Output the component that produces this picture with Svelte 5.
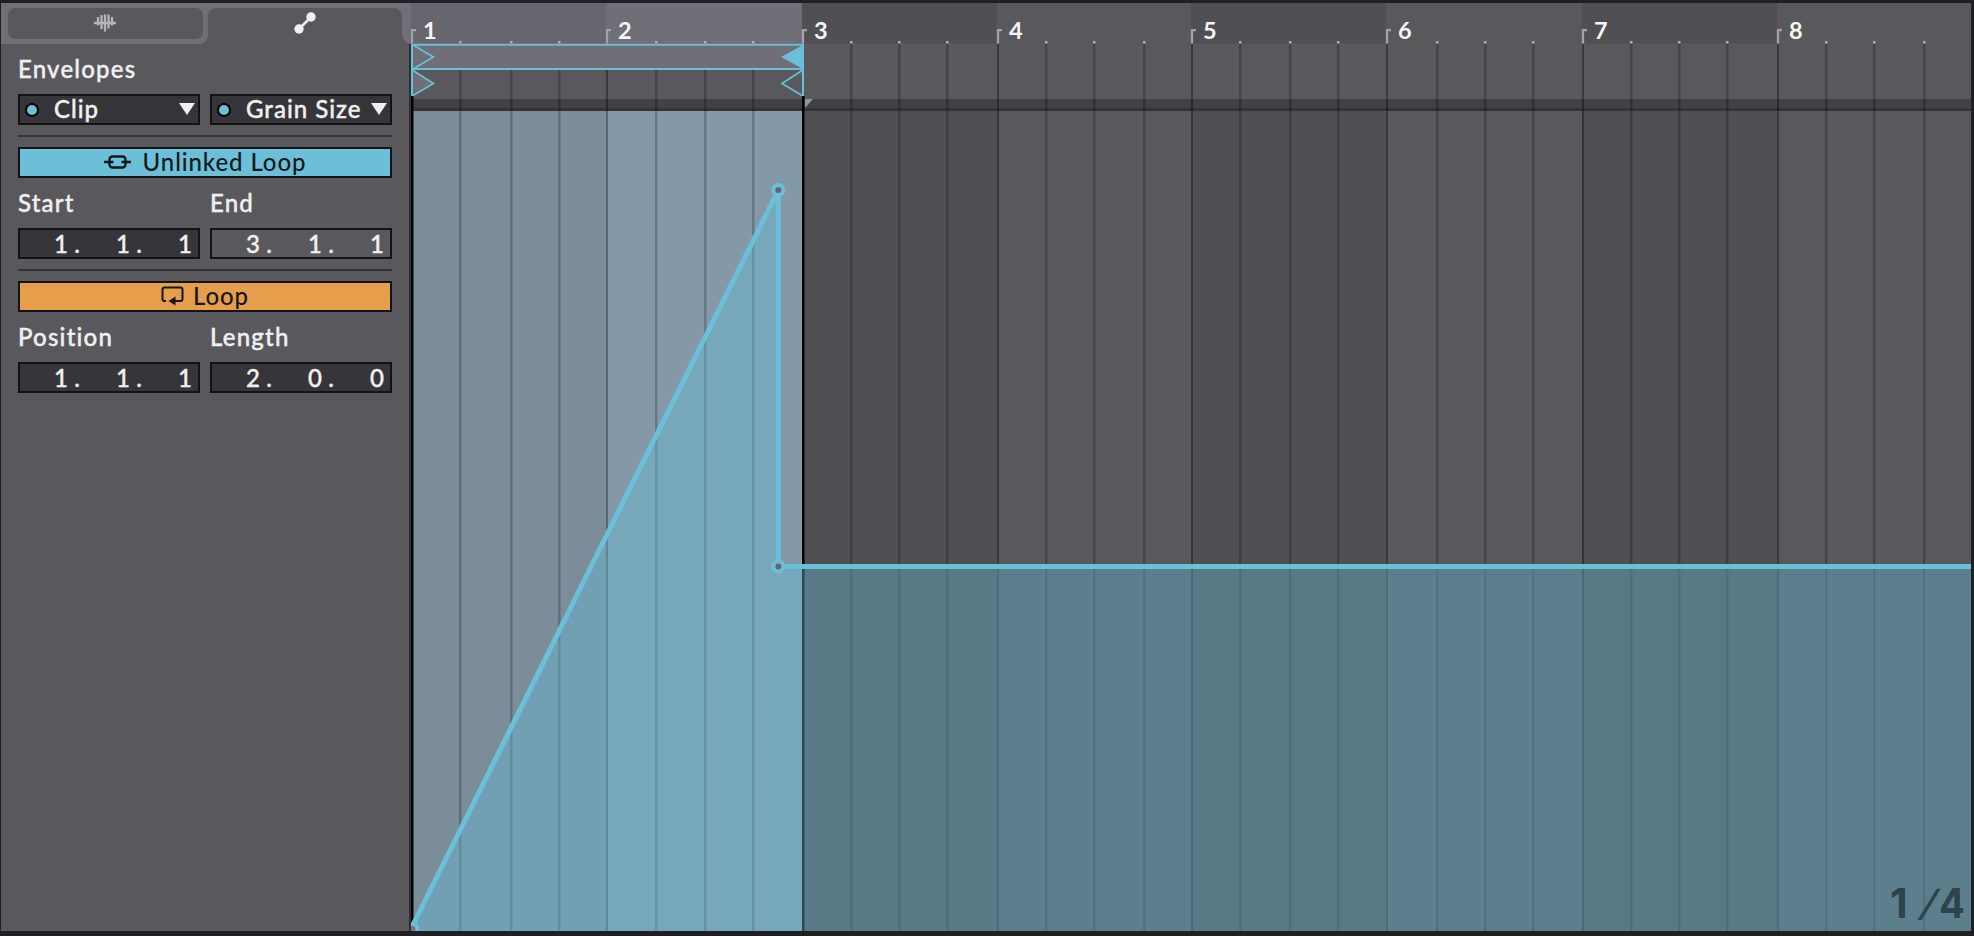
<script lang="ts">
  type Field = { label: string; parts: string[]; active?: boolean };

  const range: Field[] = [
    { label: 'Start', parts: ['1.', '1.', '1'] },
    { label: 'End', parts: ['3.', '1.', '1'], active: true }
  ];
  const loop: Field[] = [
    { label: 'Position', parts: ['1.', '1.', '1'] },
    { label: 'Length', parts: ['2.', '0.', '0'] }
  ];
  const choosers = ['Clip', 'Grain Size'];

  // left edge of every bar, followed by its three inner beats
  const bars = [
    { n: 1, x: 0, beats: [48, 99, 147] },
    { n: 2, x: 195, beats: [244, 293, 341] },
    { n: 3, x: 391, beats: [439, 487, 535] },
    { n: 4, x: 586, beats: [634, 682, 732] },
    { n: 5, x: 780, beats: [828, 878, 926] },
    { n: 6, x: 975, beats: [1025, 1073, 1121] },
    { n: 7, x: 1171, beats: [1219, 1267, 1315] },
    { n: 8, x: 1366, beats: [1414, 1462, 1512] }
  ];
  const width = 1560;
  const loopEnd = 391;

  const rulerFill = (n: number) =>
    n === 1 ? '#67656d' : n === 2 ? '#706e77' : n % 2 ? '#504f53' : '#59585d';
  const laneFill = (n: number) =>
    n === 1 ? '#7b8d9b' : n === 2 ? '#8499a8' : n % 2 ? '#504f53' : '#59585d';
  const barWidth = (i: number) => (bars[i + 1]?.x ?? width) - bars[i].x;
</script>

{#snippet fieldRow(fields: Field[])}
  <div class="row labels">
    {#each fields as f}
      <span class="label">{f.label}</span>
    {/each}
  </div>
  <div class="row">
    {#each fields as f}
      <div class="box position" class:active={f.active}>
        {#each f.parts as part}
          <span class="part"><b>{part[0]}</b><b>{part[1] ?? ''}</b></span>
        {/each}
      </div>
    {/each}
  </div>
{/snippet}

<div class="clip-view">
  <aside class="sidebar">
    <div class="tabs">
      <button class="tab" aria-label="Sample">
        <svg width="22" height="18" viewBox="0 0 22 18" fill="none" stroke="#b5b4b8" stroke-width="2.300">
          <path d="M0 9h22M4 3v8.500M7.500 1v14M11 0.500v17M14.500 0.500v14M18 3v8.500" />
        </svg>
      </button>
      <button class="tab selected" aria-label="Envelopes">
        <svg width="22" height="22" viewBox="0 0 22 22" fill="#f0f0f0">
          <path d="M5 17L17 5" stroke="#f0f0f0" stroke-width="2.500" />
          <circle cx="5" cy="17" r="4.700" />
          <circle cx="17" cy="5" r="4.700" />
        </svg>
      </button>
    </div>

    <div class="panel">
      <div class="row labels"><span class="label">Envelopes</span></div>
      <div class="row">
        {#each choosers as name}
          <button class="box chooser">
            <i class="dot"></i>
            <span class="name">{name}</span>
            <svg width="16" height="12" viewBox="0 0 16 12"><path d="M0 0h16l-8 12z" fill="#f0f0f0" /></svg>
          </button>
        {/each}
      </div>

      <hr />
      <button class="box toggle unlinked">
        <svg width="27" height="14" viewBox="0 0 27 14" fill="none" stroke="#151719" stroke-width="2.400">
          <rect x="5.500" y="1.500" width="16" height="11" rx="3" />
          <path d="M0 7h9.500M17.500 7H27" />
        </svg>
        <span>Unlinked Loop</span>
      </button>
      {@render fieldRow(range)}

      <hr />
      <button class="box toggle loop">
        <svg width="23" height="20" viewBox="0 0 23 20" fill="none" stroke="#151719" stroke-width="2">
          <path d="M5 15H3.500Q1.500 15 1.500 13V3.500Q1.500 1.500 3.500 1.500H19.500Q21.500 1.500 21.500 3.500V13Q21.500 15 19.500 15H13" />
          <path d="M7.500 15L14.500 10.500V19.500z" fill="#151719" stroke="none" />
        </svg>
        <span>Loop</span>
      </button>
      {@render fieldRow(loop)}
    </div>
  </aside>

  <svg class="timeline" {width} height="928" viewBox="0 3 1560 928">
    <rect y="3" {width} height="928" fill="#59585d" />

    <!-- bar shading -->
    {#each bars as bar, i}
      <rect x={bar.x} y="3" width={barWidth(i)} height="40.500" fill={rulerFill(bar.n)} />
      <rect x={bar.x} y="111" width={barWidth(i)} height="820" fill={laneFill(bar.n)} />
    {/each}
    <rect y="99" {width} height="9" fill="#424145" />
    <rect y="108" {width} height="3" fill="#343337" />

    <!-- grid -->
    {#each bars as bar}
      <rect x={bar.x} y="44" width="2" height="887" fill="#000" opacity="0.34" />
      {#each bar.beats as x}
        <rect {x} y="44" width="2.500" height="887" fill="#000" opacity="0.22" />
        <rect {x} y="41" width="2.500" height="2.500" fill="#aeadb0" />
      {/each}
      <path d="M{bar.x + 1} 43.500V30.200H{bar.x + 5}" fill="none" stroke="#a3a2a6" stroke-width="2.300" />
      <text class="bar-number" x={bar.x + 12} y="38.500">{bar.n}</text>
    {/each}

    <path d="M0 96h2.500v835H0zM{loopEnd} 96h2.500v835h-2.500z" fill="#000" />
    <path d="M{loopEnd + 3} 99h8l-8 9z" fill="#8499a8" />

    <!-- loop brace and start/end markers -->
    <g stroke="#6bbfd9" stroke-width="2" fill="none">
      <rect x="1" y="44.700" width="391" height="24.300" fill="#706e77" />
      <path d="M1 44V96M{loopEnd + 1} 44V96" />
      <path d="M2 45L22.500 57L2 69" stroke-width="1.700" />
      <path d="M2 70.500L22.500 83.500L2 95.500" fill="#706e77" stroke-width="1.700" />
      <path d="M391 70.500L371 83.500L391 95.500" stroke-width="1.700" />
      <path d="M392 45L370 57L392 69z" fill="#6bbfd9" stroke="none" />
    </g>

    <!-- envelope -->
    <path d="M1.500 925L367 190V566.500H{width}V931H0z" fill="#64bbd7" opacity="0.400" />
    <g stroke="#6bbfd9" fill="none">
      <path d="M2 925L367.300 190V566.500H{width}" stroke-width="5" />
      <circle cx="1.500" cy="929" r="5" fill="#77767e" stroke-width="4" />
      <circle cx="367.300" cy="190" r="5" fill="#66656d" stroke-width="4" />
      <circle cx="367.300" cy="566.500" r="5" fill="#66656d" stroke-width="4" />
    </g>
    <g class="grid-size">
      <text x="1479" y="918">1</text>
      <text class="slash" transform="translate(1507 916) skewX(-17) scale(1 0.870)">/</text>
      <text x="1528" y="918" textLength="26" lengthAdjust="spacingAndGlyphs">4</text>
    </g>
  </svg>
</div>

<style>
  :global(body) {
    background: #202022;
    overflow: hidden;
  }

  .clip-view {
    box-sizing: border-box;
    width: 1974px;
    height: 936px;
    display: flex;
    padding: 3px 3px 5px 1px;
    background: #202022;
    font-family: Lato, 'Liberation Sans', sans-serif;
    font-size: 24px;
    font-weight: 500;
    color: #f0f0f0;
  }

  .sidebar {
    width: 410px;
    display: flex;
    flex-direction: column;
    flex-shrink: 0;
    background: #59585d;
    -webkit-text-stroke: 0.4px currentColor;
  }

  button {
    border: none;
    padding: 0;
    font: inherit;
    color: inherit;
  }

  .tabs {
    display: flex;
    gap: 5px;
    height: 40.5px;
    box-sizing: border-box;
    padding: 5px 9px 0 7px;
    background: #706e77;
  }

  .tab {
    position: relative;
    flex: 1;
    height: 31px;
    display: flex;
    align-items: center;
    justify-content: center;
    border-radius: 7px;
    background: #59585d;
  }

  .tab:not(.selected) {
    padding-bottom: 1px;
  }

  .tab.selected {
    height: 36px;
    padding-bottom: 6px;
    border-radius: 8px 8px 0 0;
  }

  /* flared feet of the open tab */
  .tab.selected::before,
  .tab.selected::after {
    content: '';
    position: absolute;
    bottom: 0;
    width: 9px;
    height: 9px;
  }

  .tab.selected::before {
    right: 100%;
    background: radial-gradient(circle at 0 0, transparent 8.5px, #59585d 9px);
  }

  .tab.selected::after {
    left: 100%;
    background: radial-gradient(circle at 100% 0, transparent 8.5px, #59585d 9px);
  }

  .panel {
    flex: 1;
    padding: 0 17px;
    border-right: 2px solid #302f33;
  }

  .row {
    display: flex;
    gap: 10px;
  }

  .labels {
    height: 50px;
    align-items: center;
  }

  .label {
    width: 182px;
    letter-spacing: 1.2px;
  }

  .box {
    box-sizing: border-box;
    width: 182px;
    height: 31px;
    display: flex;
    align-items: center;
    flex-shrink: 0;
    border: 2px solid #131315;
    background: #363539;
  }

  .chooser {
    padding: 0 3px 1px 5px;
    letter-spacing: 1px;
  }

  .dot {
    width: 10px;
    height: 10px;
    margin: 2px 15px 0 0;
    border: 2px solid #000;
    border-radius: 50%;
    background: #6bbfd9;
  }

  .name {
    flex: 1;
    text-align: left;
    white-space: nowrap;
  }

  hr {
    width: 374px;
    height: 2px;
    margin: 10px 0;
    border: none;
    background: #343337;
  }

  .toggle {
    width: 374px;
    justify-content: center;
    padding-bottom: 2px;
    color: #151719;
    letter-spacing: 0.9px;
    -webkit-text-stroke-width: 0;
  }

  .toggle svg {
    margin-top: 2px;
  }

  .unlinked {
    gap: 12px;
    background: #6bbfd9;
  }

  .loop {
    gap: 9px;
    background: #e49e4c;
  }

  .position {
    justify-content: flex-end;
    gap: 30px;
    padding-right: 5px;
  }

  .position.active {
    background: #59585d;
  }

  .part {
    display: flex;
  }

  .part b {
    width: 16px;
    text-align: center;
    font-weight: 500;
  }

  .part:last-child b:last-child {
    display: none;
  }

  .timeline {
    display: block;
    flex-shrink: 0;
  }

  .bar-number {
    font-size: 23.5px;
    font-weight: 700;
    fill: #f5f5f5;
  }

  .grid-size {
    font-family: Inter, 'Liberation Sans', sans-serif;
    font-size: 41px;
    font-weight: 700;
    fill: #2f434b;
  }

  .slash {
    font-weight: 500;
  }
</style>
